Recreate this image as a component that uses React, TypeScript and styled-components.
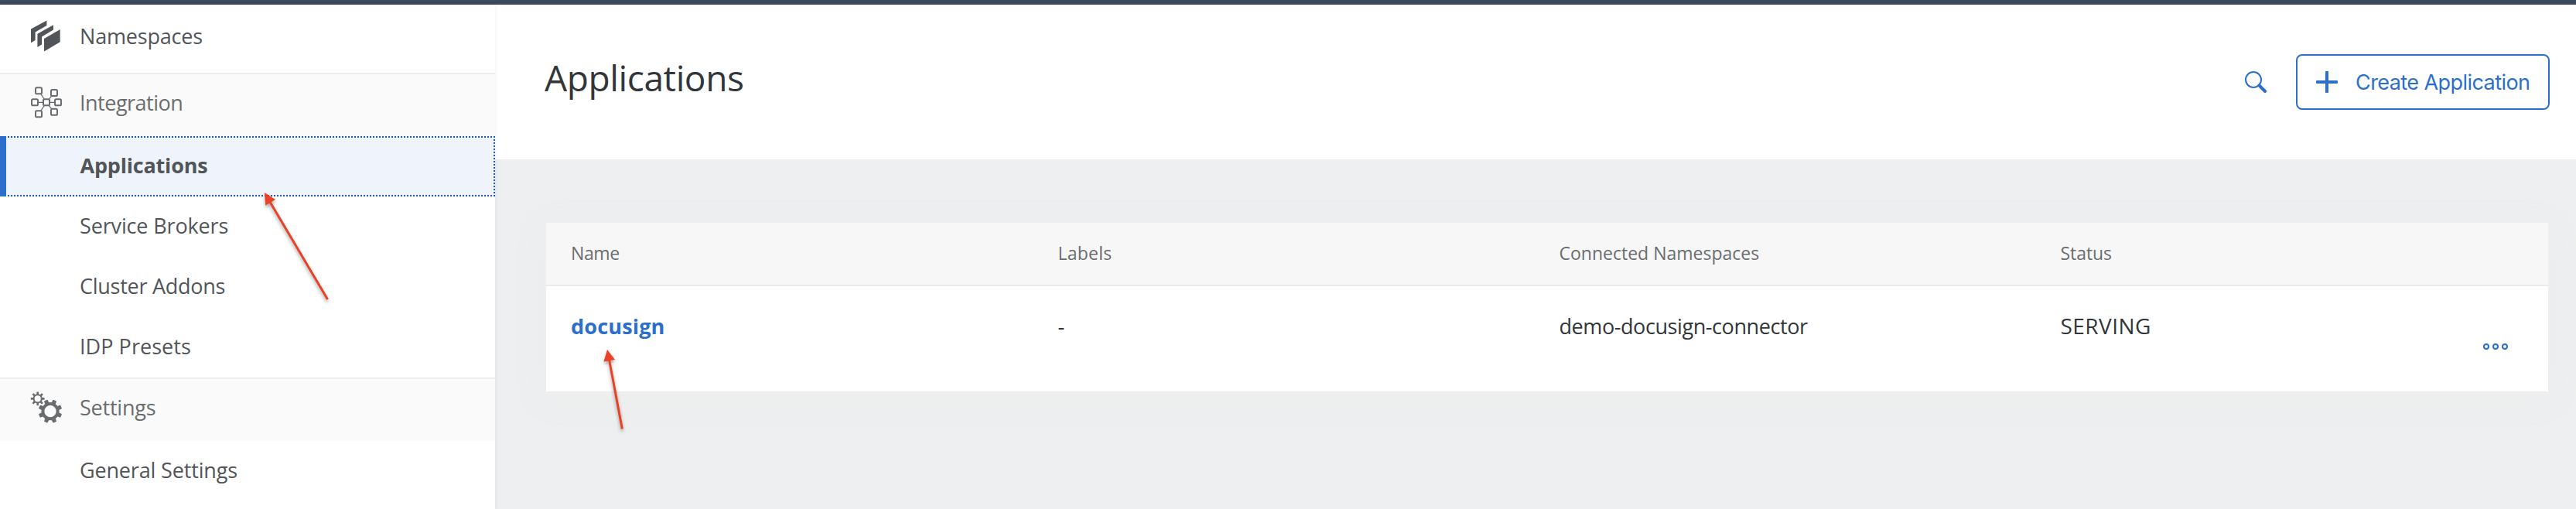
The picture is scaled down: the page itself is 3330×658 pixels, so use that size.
import React from "react";
import styled, { createGlobalStyle, css } from "styled-components";

const GlobalStyle = createGlobalStyle`
  * { box-sizing: border-box; }
  body { margin: 0; background: #fff; font-family: "Open Sans", "Noto Sans", sans-serif; overflow: hidden; }
`;

const Page = styled.div`
  position: relative;
  display: flex;
  flex-direction: column;
  width: 3330px;
  height: 658px;
  overflow: hidden;
`;

const TopBar = styled.div`
  flex: none;
  height: 6px;
  background: #3a495c;
`;

const Body = styled.div`
  flex: 1;
  display: flex;
  min-height: 0;
`;

const Sidebar = styled.nav`
  position: relative;
  z-index: 1;
  flex: none;
  width: 640px;
  background: #fff;
  box-shadow: 0 0 5px rgba(0, 0, 0, 0.08);
  color: #51555a;
`;

const Label = styled.span<{ $spacing?: number }>`
  font-size: 27px;
  line-height: 31px;
  white-space: nowrap;
  letter-spacing: ${(p) => p.$spacing ?? 0}px;
`;

const StatusLabel = styled(Label)`
  font-size: 28px;
  line-height: 30px;
`;

const rowBase = css`
  display: flex;
  align-items: flex-start;
`;

const TopItem = styled.div`
  ${rowBase}
  height: 90px;
  padding: 25px 0 0 40px;
  border-bottom: 2px solid #eeeeef;
`;

const Category = styled.div<{ $ruled?: boolean }>`
  ${rowBase}
  height: ${(p) => (p.$ruled ? 82 : 80)}px;
  padding: 21px 0 0 40px;
  border-top: ${(p) => (p.$ruled ? "2px solid #eeeeef" : "none")};
  background: #fafafa;
  color: #6a6d70;
`;

const IconSlot = styled.span`
  flex: none;
  width: 40px;
  height: 44px;
  margin-right: 23px;
  margin-top: -6px;

  svg { display: block; overflow: visible; }
`;

const SubItem = styled.div`
  ${rowBase}
  height: 78px;
  padding: 22px 0 0 103px;
`;

const ActiveItem = styled.div`
  display: flex;
  height: 78px;
  background: #eff4fc;
  border-left: 8px solid #2b6fcb;
  font-weight: 700;
`;

const FocusFrame = styled.div`
  flex: 1;
  display: flex;
  align-items: flex-start;
  margin-left: 2px;
  padding: 20px 0 0 93.5px;
  border: 2px dotted #1f5bb0;
  border-left: none;
`;

const Main = styled.main`
  flex: 1;
  display: flex;
  flex-direction: column;
  background: #edeff0;
`;

const Header = styled.header`
  flex: none;
  display: flex;
  align-items: flex-start;
  justify-content: space-between;
  height: 200px;
  padding: 64px 34px 0 64px;
  background: #fff;
`;

const Title = styled.h1`
  margin: 5px 0 0;
  font-size: 46px;
  line-height: 50px;
  font-weight: 400;
  letter-spacing: -0.37px;
  color: #32363a;
`;

const Actions = styled.div`
  display: flex;
  align-items: flex-start;
  gap: 38px;
`;

const SearchButton = styled.button`
  width: 28px;
  height: 28px;
  margin-top: 22px;
  padding: 0;
  border: 0;
  background: none;

  svg { display: block; }
`;

const CreateButton = styled.button`
  display: flex;
  align-items: flex-start;
  width: 328px;
  height: 72px;
  padding: 18px 0 0 24px;
  border: 2px solid #2b6fcb;
  border-radius: 8px;
  background: #fff;
  color: #2b6fcb;
  font: 400 27px/33px Inter, sans-serif;
  letter-spacing: -0.57px;
  white-space: nowrap;

  svg { flex: none; display: block; margin: 2px 23px 0 0; }
`;

const Table = styled.section`
  margin: 82px 36px 0 66px;
  background: #fff;
  box-shadow: 0 8px 36px rgba(237, 237, 236, 0.9);
`;

const tableGrid = css`
  display: grid;
  grid-template-columns: 629.5px 648px 648px 1fr auto;
  align-items: start;
  padding: 0 52px 0 32px;
  white-space: nowrap;
`;

const HeadRow = styled.div`
  ${tableGrid}
  height: 82px;
  padding-top: 26px;
  border-bottom: 2px solid #ebebeb;
  background: #f7f7f7;
  color: #6a6d70;
`;

const HeadCell = styled.span<{ $spacing: number }>`
  font-size: 23px;
  line-height: 26px;
  letter-spacing: ${(p) => p.$spacing}px;
`;

const DataRow = styled.div`
  ${tableGrid}
  height: 136px;
  padding-top: 36px;
  color: #32363a;
`;

const NameLink = styled(Label)`
  color: #2b6fcb;
  font-weight: 700;
`;

const MoreButton = styled.button`
  display: flex;
  gap: 4px;
  margin-top: 38px;
  padding: 0;
  border: 0;
  background: none;
`;

const Dot = styled.span`
  width: 8px;
  height: 8px;
  border: 2px solid #2b6fcb;
  border-radius: 50%;
`;

const Annotations = styled.svg`
  position: absolute;
  z-index: 2;
  top: 0;
  left: 0;
  pointer-events: none;
  filter: drop-shadow(0 3px 2px rgba(0, 0, 0, 0.35));
`;

const NamespacesIcon = () => (
  <svg width="40" height="44" viewBox="40 25 40 44" fill="#51555a">
    <path d="M40 37.6 60.4 26.4V33L45.6 41.6V52L40 55.2Z" />
    <path d="M48.4 43.8 69 32.2V38.6L54 47.4V57.6L48.4 60.9Z" />
    <path d="M57 50 77.7 38V54.3L57 66.4Z" />
  </svg>
);

const nodes = [[50, 117.3], [70, 120], [45, 132.3], [60, 132.3], [75, 132.3], [50, 147.3], [70, 144.8]];

const IntegrationIcon = () => (
  <svg width="40" height="44" viewBox="40 111 40 44" stroke="#6a6d70">
    <path d="M50 117.3 60 132.3 70 120M45 132.3H75M50 147.3 60 132.3 70 144.8" fill="none" strokeWidth="1.2" />
    {nodes.map(([x, y]) => (
      <rect key={`${x}-${y}`} x={x - 4} y={y - 4} width="8" height="8" rx="1.6" fill="#fafafa" strokeWidth="2" />
    ))}
  </svg>
);

type GearProps = { x: number; y: number; ring: number; band: number; reach: number; tooth: number; turn: number };

const Gear = ({ x, y, ring, band, reach, tooth, turn }: GearProps) => (
  <g transform={`translate(${x} ${y})`}>
    <circle r={ring} fill="none" stroke="#6a6d70" strokeWidth={band} />
    {Array.from({ length: 8 }, (_, i) => (
      <rect key={i} x={-tooth / 2} y={-reach} width={tooth} height={reach - ring} rx={tooth / 5} fill="#6a6d70" transform={`rotate(${i * 45 + turn})`} />
    ))}
  </g>
);

const SettingsIcon = () => (
  <svg width="40" height="44" viewBox="40 505 40 44">
    <Gear x={48.7} y={515.4} ring={5.1} band={2.1} reach={8.9} tooth={2.6} turn={0} />
    <Gear x={65} y={531.7} ring={9.6} band={4} reach={15.3} tooth={5.2} turn={22.5} />
  </svg>
);

const SearchIcon = () => (
  <svg width="28" height="28" viewBox="0 0 28 28" fill="none" stroke="#2b6fcb">
    <circle cx="11" cy="11" r="10" strokeWidth="2" />
    <path d="M18.5 18.5 26 26" strokeWidth="4" strokeLinecap="round" />
  </svg>
);

const PlusIcon = () => (
  <svg width="28" height="28" viewBox="0 0 28 28" fill="#2b6fcb">
    <rect x="0" y="12" width="28" height="4" rx="1" />
    <rect x="12" y="0" width="4" height="28" rx="1" />
  </svg>
);

export default function App() {
  return (
    <Page>
      <GlobalStyle />
      <TopBar />
      <Body>
        <Sidebar>
          <TopItem>
            <IconSlot><NamespacesIcon /></IconSlot>
            <Label $spacing={-0.18}>Namespaces</Label>
          </TopItem>
          <Category>
            <IconSlot><IntegrationIcon /></IconSlot>
            <Label $spacing={-0.5}>Integration</Label>
          </Category>
          <ActiveItem>
            <FocusFrame><Label $spacing={-0.2}>Applications</Label></FocusFrame>
          </ActiveItem>
          <SubItem><Label $spacing={-0.15}>Service Brokers</Label></SubItem>
          <SubItem><Label $spacing={-0.27}>Cluster Addons</Label></SubItem>
          <SubItem><Label $spacing={0.05}>IDP Presets</Label></SubItem>
          <Category $ruled>
            <IconSlot><SettingsIcon /></IconSlot>
            <Label $spacing={-0.23}>Settings</Label>
          </Category>
          <SubItem><Label $spacing={-0.16}>General Settings</Label></SubItem>
        </Sidebar>
        <Main>
          <Header>
            <Title>Applications</Title>
            <Actions>
              <SearchButton aria-label="Search"><SearchIcon /></SearchButton>
              <CreateButton><PlusIcon />Create Application</CreateButton>
            </Actions>
          </Header>
          <Table>
            <HeadRow>
              <HeadCell $spacing={-0.4}>Name</HeadCell>
              <HeadCell $spacing={0.24}>Labels</HeadCell>
              <HeadCell $spacing={0}>Connected Namespaces</HeadCell>
              <HeadCell $spacing={-0.06}>Status</HeadCell>
            </HeadRow>
            <DataRow>
              <NameLink $spacing={0.18}>docusign</NameLink>
              <Label>-</Label>
              <Label $spacing={-0.42}>demo-docusign-connector</Label>
              <StatusLabel $spacing={0.47}>SERVING</StatusLabel>
              <MoreButton aria-label="More"><Dot /><Dot /><Dot /></MoreButton>
            </DataRow>
          </Table>
        </Main>
      </Body>
      <Annotations width="3330" height="658" viewBox="0 0 3330 658" fill="#ec4025" stroke="#ec4025">
        <path d="M349 261 423.500 387" strokeWidth="3" />
        <path d="M342 249 356 258 343.300 265.500Z" stroke="none" />
        <path d="M787.500 465 804.300 554.500" strokeWidth="3" />
        <path d="M785 452 795 465 780.500 467.500Z" stroke="none" />
      </Annotations>
    </Page>
  );
}
